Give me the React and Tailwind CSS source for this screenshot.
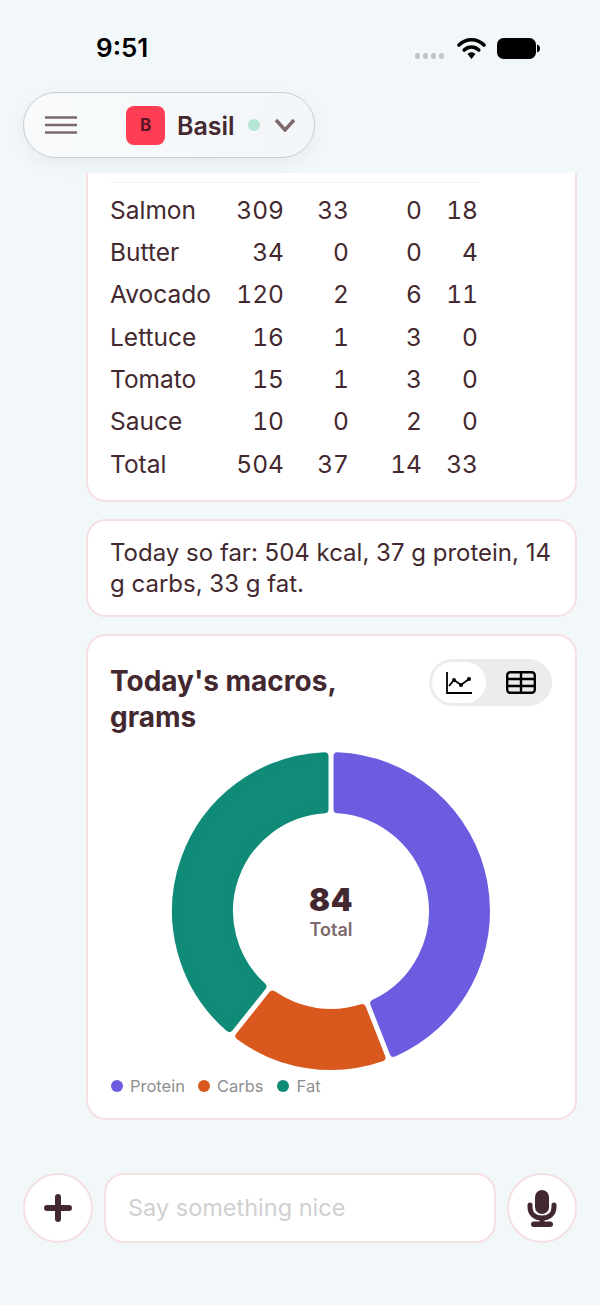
import React from 'react';

const rows = [
  ['Salmon', 309, 33, 0, 18],
  ['Butter', 34, 0, 0, 4],
  ['Avocado', 120, 2, 6, 11],
  ['Lettuce', 16, 1, 3, 0],
  ['Tomato', 15, 1, 3, 0],
  ['Sauce', 10, 0, 2, 0],
  ['Total', 504, 37, 14, 33],
];

const CX = 160;
const CY = 160;
const OUTER = 159;
const INNER = 98;
const CORNER = 4;
const GAP = 2.5;

const point = (r, deg) => {
  const a = (deg * Math.PI) / 180;
  return `${(CX + r * Math.sin(a)).toFixed(2)} ${(CY - r * Math.cos(a)).toFixed(2)}`;
};

// ring slice, inset so a round stroke of the same colour gives soft corners
function slicePath(from, to) {
  const ro = OUTER - CORNER;
  const ri = INNER + CORNER;
  const inset = GAP + CORNER;
  const ao = (Math.asin(inset / ro) * 180) / Math.PI;
  const ai = (Math.asin(inset / ri) * 180) / Math.PI;
  const large = to - from - 2 * ao > 180 ? 1 : 0;
  return [
    `M ${point(ro, from + ao)}`,
    `A ${ro} ${ro} 0 ${large} 1 ${point(ro, to - ao)}`,
    `L ${point(ri, to - ai)}`,
    `A ${ri} ${ri} 0 ${large} 0 ${point(ri, from + ai)}`,
    'Z',
  ].join(' ');
}

const slices = [
  { color: '#6c5ce0', from: 0, to: 158.6 },
  { color: '#d9581e', from: 158.6, to: 218.6 },
  { color: '#0f8b78', from: 218.6, to: 360 },
];

function StatusBar() {
  return (
    <div className="h-[92px] shrink-0 flex items-start justify-between pl-[96px] pr-[60px] pt-[31px]">
      <span className="text-[26px] leading-[34px] font-semibold text-black">9:51</span>
      <div className="flex items-center pt-[6px]">
        <div className="flex gap-[2.5px] mt-[16px] mr-[13px]">
          <span className="w-[5.5px] h-[5.5px] rounded-full bg-[#c2c5c9]" />
          <span className="w-[5.5px] h-[5.5px] rounded-full bg-[#c2c5c9]" />
          <span className="w-[5.5px] h-[5.5px] rounded-full bg-[#c2c5c9]" />
          <span className="w-[5.5px] h-[5.5px] rounded-full bg-[#c2c5c9]" />
        </div>
        <svg width="29" height="22" viewBox="0 0 29 22" className="mr-[11px]">
          <path d="M2 8 C9 1 20 1 27 8" fill="none" stroke="#000" strokeWidth="3.6" strokeLinecap="round" />
          <path d="M7.2 13 C11.5 9 17.5 9 21.8 13" fill="none" stroke="#000" strokeWidth="3.6" strokeLinecap="round" />
          <path d="M10.5 17 C13 14.5 16 14.5 18.5 17 L14.5 22 Z" fill="#000" />
        </svg>
        <svg width="43" height="21" viewBox="0 0 43 21">
          <rect x="0" y="0" width="39" height="21" rx="6.5" fill="#000" />
          <path d="M40 6.5 C42 7 43 8.5 43 10.5 C43 12.5 42 14 40 14.5 Z" fill="#000" />
        </svg>
      </div>
    </div>
  );
}

function Header() {
  return (
    <div className="shrink-0 ml-[23px] w-[292px] h-[66px] rounded-full border border-[#c9cdd1] bg-gradient-to-r from-[#f8fafb] to-[#f3f6f9] shadow-[0_6px_16px_rgba(90,100,120,0.08)] flex items-center pl-[20px]">
      <svg width="34" height="18" viewBox="0 0 34 18">
        <path d="M1 1.5 H33 M1 9 H33 M1 16.5 H33" stroke="#7d686c" strokeWidth="2.4" />
      </svg>
      <div className="ml-[48px] w-[39px] h-[39px] pt-[2px] rounded-[8px] bg-[#ff3d55] flex items-center justify-center text-[17px] font-bold text-[#5a1522]">
        B
      </div>
      <span className="ml-[12px] mt-[2px] text-[25px] leading-none font-semibold text-[#43292f]">Basil</span>
      <span className="ml-[13px] w-[12px] h-[12px] rounded-full bg-[#b5e5d3]" />
      <svg width="22" height="14" viewBox="0 0 22 14" className="ml-[14px]">
        <path d="M2 2 L11 12 L20 2" fill="none" stroke="#7d686c" strokeWidth="3.4" />
      </svg>
    </div>
  );
}

function MacroTable() {
  return (
    <div className="h-[329px] shrink-0 bg-white border-2 border-t-0 border-[#f5e0e4] rounded-b-[20px] pl-[22px] pt-[9px] text-[24.5px] text-[#43292f]">
      <div className="w-[370px] h-px bg-[#f4f0f0] mb-[6px]" />
      {rows.map(([name, kcal, protein, carbs, fat]) => (
        <div key={name} className="grid grid-cols-[114px_60px_65px_73px_56px] h-[42.3px] items-center tabular-nums">
          <span>{name}</span>
          <span className="text-right">{kcal}</span>
          <span className="text-right">{protein}</span>
          <span className="text-right">{carbs}</span>
          <span className="text-right">{fat}</span>
        </div>
      ))}
    </div>
  );
}

function ChartCard() {
  return (
    <div className="h-[486px] shrink-0 bg-white border-2 border-[#f5e0e4] rounded-[20px] pl-[22px] pr-[23px] pt-[23px]">
      <div className="flex justify-between items-start">
        <h2 className="text-[28px] leading-[36px] font-bold text-[#43292f] w-[260px] mt-[4px]">Today's macros, grams</h2>
        <div className="w-[123px] h-[47px] rounded-full bg-[#ececec] p-[3px] flex items-center">
          <div className="w-[54px] h-[41px] rounded-full bg-white flex items-center justify-center">
            <svg width="27" height="23" viewBox="0 0 27 23" fill="none" stroke="#000" strokeWidth="1.8">
              <path d="M1 1 V22 H26" />
              <path d="M3 15 L8 9 L15 14 L23 8" />
              <circle cx="8" cy="9" r="2" fill="#000" stroke="none" />
              <circle cx="15" cy="14" r="2" fill="#000" stroke="none" />
              <circle cx="23" cy="8" r="2" fill="#000" stroke="none" />
            </svg>
          </div>
          <div className="flex-1 flex items-center justify-center pl-[6px]">
            <svg width="30" height="23" viewBox="0 0 30 23" fill="none" stroke="#000" strokeWidth="2.4">
              <rect x="1.2" y="1.2" width="27.6" height="20.6" rx="3" />
              <path d="M1 8 H29 M1 15 H29 M15 1 V22" />
            </svg>
          </div>
        </div>
      </div>
      <div className="relative w-[320px] h-[320px] mx-auto mt-[16px]">
        <svg width="320" height="320" viewBox="0 0 320 320">
          {slices.map((s) => (
            <path
              key={s.color}
              d={slicePath(s.from, s.to)}
              fill={s.color}
              stroke={s.color}
              strokeWidth={CORNER * 2}
              strokeLinejoin="round"
            />
          ))}
        </svg>
        <div className="absolute inset-0 flex flex-col items-center justify-center pt-[2px]">
          <span className="text-[31px] leading-[36px] font-black tracking-[0.5px] text-[#43292f]">84</span>
          <span className="text-[18px] leading-[24px] font-semibold text-[#7d686c]">Total</span>
        </div>
      </div>
      <div className="flex items-center mt-[5px] ml-[1px] text-[16.5px] leading-[20px] text-[#8f8f8f]">
        <span className="w-[12px] h-[12px] rounded-full bg-[#6c5ce0] mr-[7px]" />
        <span className="mr-[13px]">Protein</span>
        <span className="w-[12px] h-[12px] rounded-full bg-[#d9581e] mr-[7px]" />
        <span className="mr-[13px]">Carbs</span>
        <span className="w-[12px] h-[12px] rounded-full bg-[#0f8b78] mr-[8px]" />
        <span>Fat</span>
      </div>
    </div>
  );
}

function InputBar() {
  return (
    <div className="shrink-0 flex gap-[11px] px-[23px] h-[70px]">
      <button className="w-[70px] h-[70px] shrink-0 rounded-full bg-white border-2 border-[#f5e0e4] flex items-center justify-center">
        <svg width="28" height="28" viewBox="0 0 28 28">
          <path d="M14 3 V25 M3 14 H25" stroke="#43292f" strokeWidth="6" strokeLinecap="round" />
        </svg>
      </button>
      <div className="flex-1 bg-white border-2 border-[#f5e0e4] rounded-[20px] flex items-center pl-[22px] text-[23.5px] text-[#d0d0d0]">
        Say something nice
      </div>
      <button className="w-[70px] h-[70px] shrink-0 rounded-full bg-white border-2 border-[#f5e0e4] flex items-center justify-center">
        <svg width="30" height="37" viewBox="0 0 30 37">
          <rect x="8" y="0" width="14" height="24" rx="7" fill="#43292f" />
          <path d="M3 15 V17 C3 24 8 28 15 28 C22 28 27 24 27 17 V15" fill="none" stroke="#43292f" strokeWidth="5" strokeLinecap="round" />
          <path d="M15 28 V33" stroke="#43292f" strokeWidth="5" />
          <rect x="4" y="31.5" width="22" height="5.5" rx="2.75" fill="#43292f" />
        </svg>
      </button>
    </div>
  );
}

export default function App() {
  return (
    <div className="w-[600px] h-[1305px] overflow-hidden bg-[#f2f7fa] flex flex-col font-[Inter,sans-serif]">
      <StatusBar />
      <Header />
      <div className="flex flex-col gap-[17px] pl-[86px] pr-[23px] mt-[15px] mb-[53px]">
        <MacroTable />
        <div className="h-[98px] shrink-0 bg-white border-2 border-[#f5e0e4] rounded-[20px] pl-[22px] pr-[23px] flex items-center text-[24px] leading-[31px] text-[#43292f]">
          <p>Today so far: 504 kcal, 37 g protein, 14 g carbs, 33 g fat.</p>
        </div>
        <ChartCard />
      </div>
      <InputBar />
    </div>
  );
}
